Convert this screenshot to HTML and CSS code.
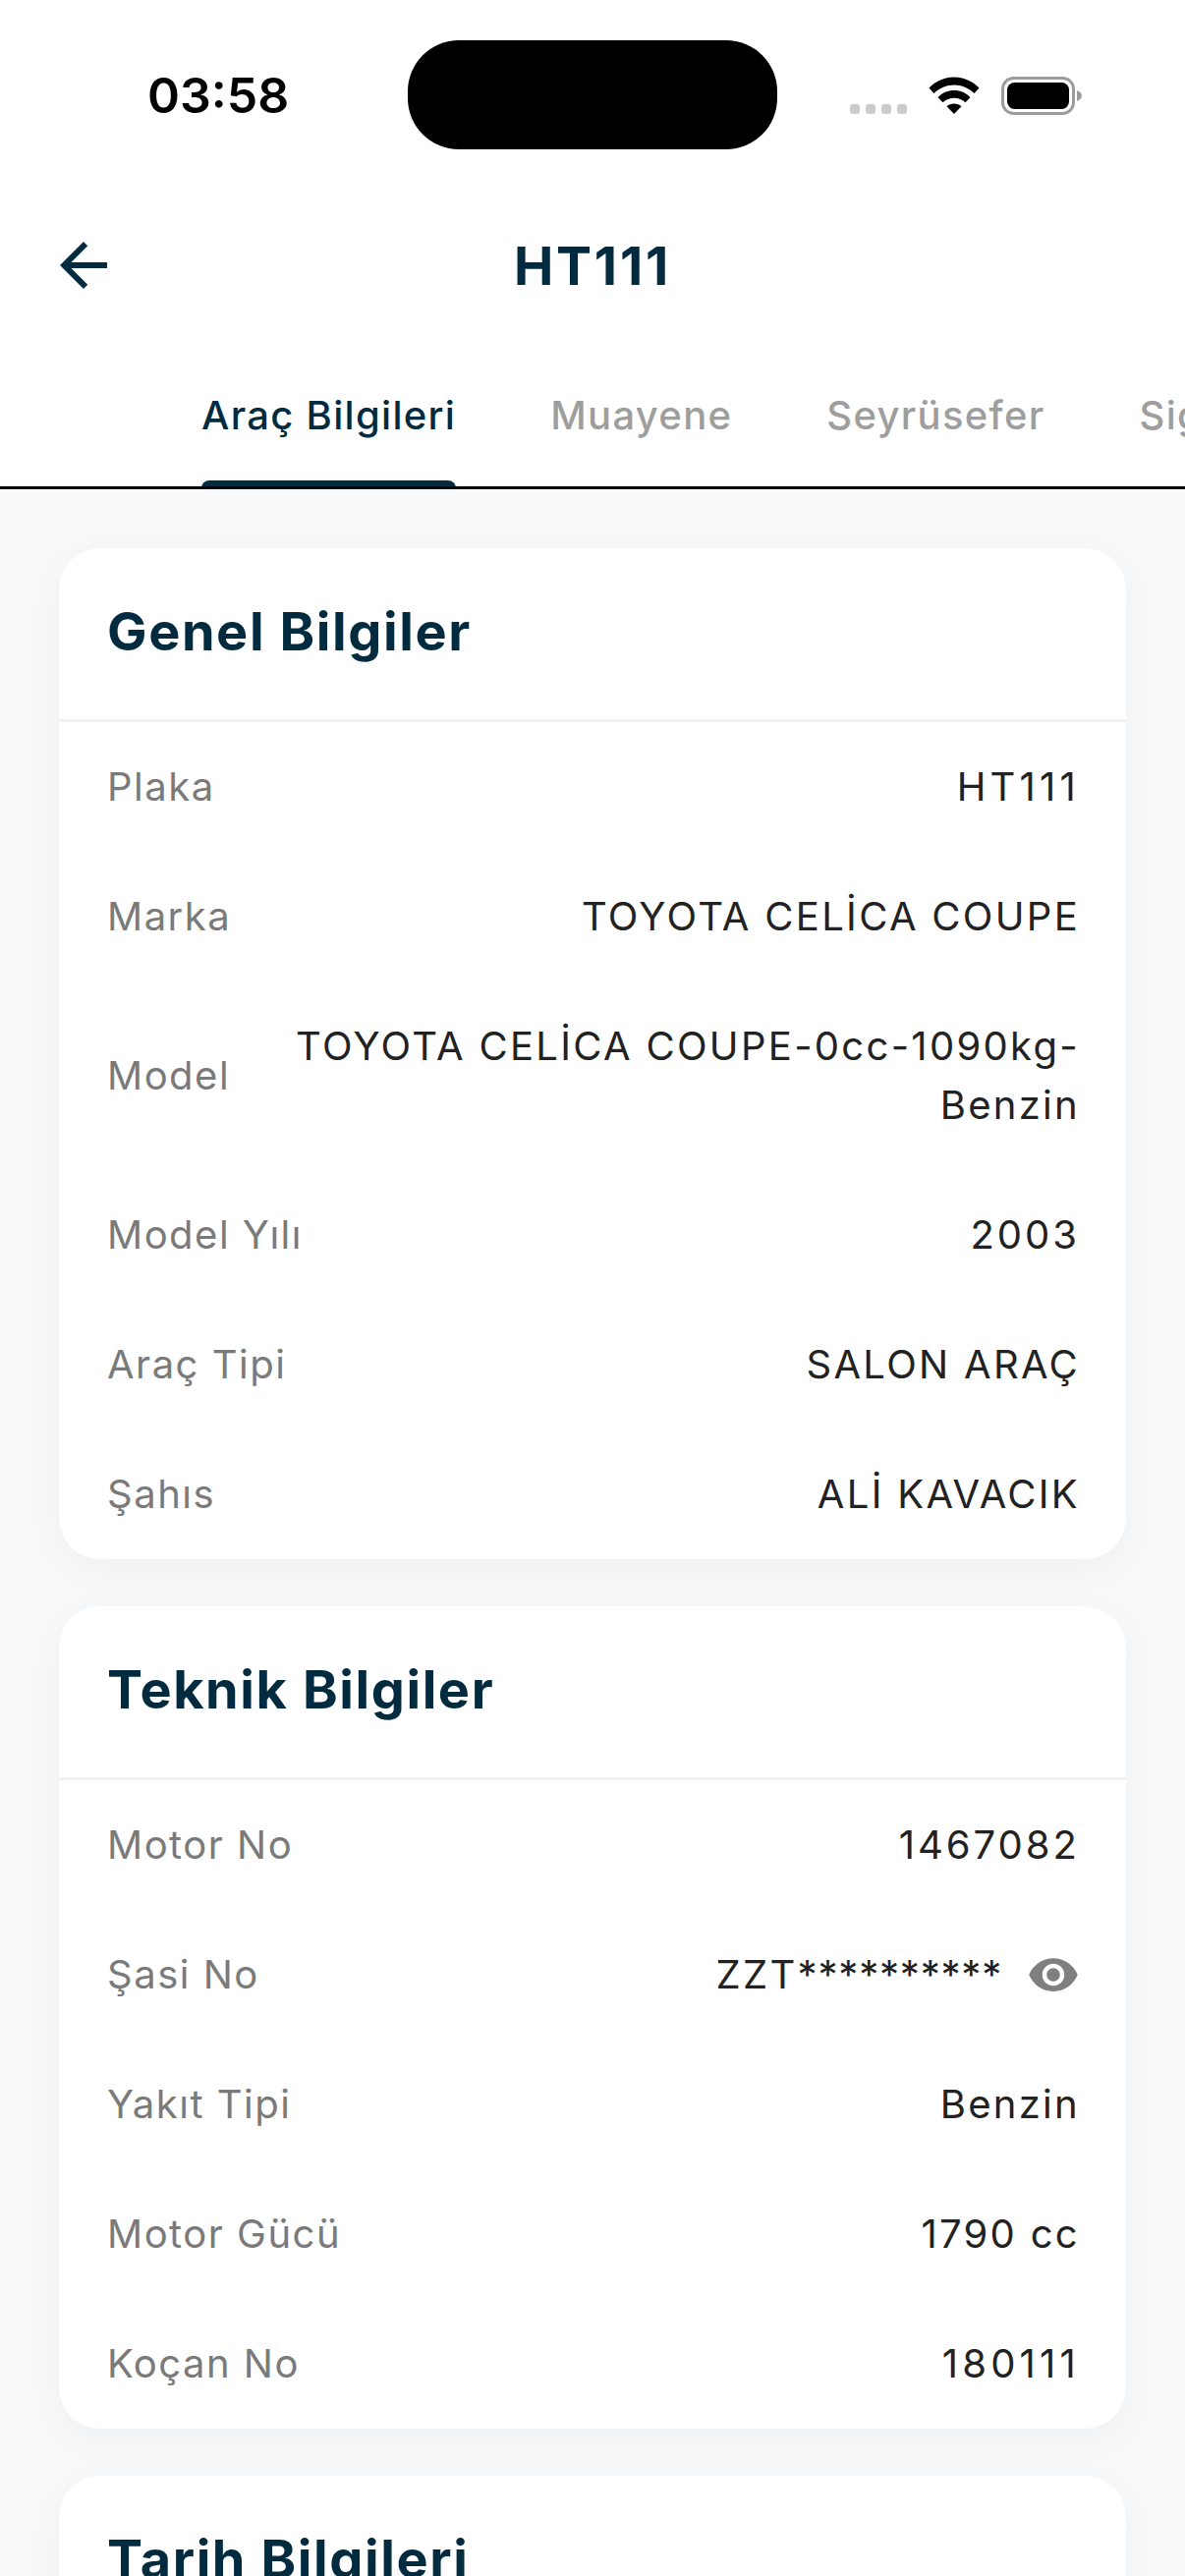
FILE: index.html
```html
<!DOCTYPE html>
<html lang="tr">
<head>
    <meta charset="UTF-8">
    <meta name="viewport" content="width=device-width, initial-scale=1.0">
    <title>HT111</title>
    <link rel="stylesheet" href="styles.css">
</head>
<body>
    <header class="top">
        <div class="status-bar">
            <span class="clock">03:58</span>
            <div class="island"></div>
            <div class="status-icons">
                <div class="signal"><i></i><i></i><i></i><i></i></div>
                <svg class="wifi" width="52" height="38" viewBox="0 0 52 38">
                    <path d="M0.5 11.5C7.5 4.5 16 0.5 26 0.5S44.5 4.5 51.5 11.5L46.5 17C40.5 11.5 34 8.5 26 8.5S11.500 11.500 5.500 17Z"/>
                    <path d="M9.500 21C14 16.500 19.500 14 26 14S38 16.500 42.500 21L37.500 26.300C34 23.300 30.500 21.800 26 21.800S18 23.300 14.500 26.300Z"/>
                    <path d="M18.500 30.300C20.500 28.500 23 27.500 26 27.500S31.500 28.500 33.500 30.300L26 38Z"/>
                </svg>
                <svg class="battery" width="82" height="39" viewBox="0 0 82 39">
                    <rect x="1.500" y="1.500" width="72" height="36" rx="11" fill="none" stroke="#9c9c9c" stroke-width="3"/>
                    <rect x="6" y="6" width="63" height="27" rx="7.500" fill="#000"/>
                    <path d="M77 14C80 15 82 17 82 19.500S80 24 77 25Z" fill="#9c9c9c"/>
                </svg>
            </div>
        </div>

        <div class="app-bar">
            <svg class="back" width="72" height="72" viewBox="0 0 24 24">
                <path d="M20 11H7.830l5.590-5.590L12 4l-8 8 8 8 1.410-1.410L7.830 13H20v-2z"/>
            </svg>
            <h1>HT111</h1>
        </div>

        <nav class="tabs">
            <a class="tab active">Araç Bilgileri</a>
            <a class="tab">Muayene</a>
            <a class="tab">Seyrüsefer</a>
            <a class="tab">Sigorta</a>
        </nav>
    </header>

    <main class="content">
        <section class="card">
            <h2>Genel Bilgiler</h2>
            <div class="row"><span class="label">Plaka</span><span class="value ones">HT111</span></div>
            <div class="row"><span class="label">Marka</span><span class="value">TOYOTA CELİCA COUPE</span></div>
            <div class="row"><span class="label">Model</span><span class="value">TOYOTA CELİCA COUPE-0cc-1090kg-Benzin</span></div>
            <div class="row"><span class="label">Model Yılı</span><span class="value digits">2003</span></div>
            <div class="row"><span class="label">Araç Tipi</span><span class="value">SALON ARAÇ</span></div>
            <div class="row"><span class="label">Şahıs</span><span class="value">ALİ KAVACIK</span></div>
        </section>

        <section class="card">
            <h2>Teknik Bilgiler</h2>
            <div class="row"><span class="label">Motor No</span><span class="value digits">1467082</span></div>
            <div class="row">
                <span class="label">Şasi No</span>
                <span class="value with-icon">
                    <span>ZZT<span class="mask">**********</span></span>
                    <svg class="eye" width="54" height="54" viewBox="0 0 24 24">
                        <path d="M12 4.500C7 4.500 2.730 7.610 1 12c1.730 4.390 6 7.500 11 7.500s9.270-3.110 11-7.500c-1.730-4.390-6-7.500-11-7.500zM12 17c-2.760 0-5-2.240-5-5s2.240-5 5-5 5 2.240 5 5-2.240 5-5 5zm0-8c-1.660 0-3 1.340-3 3s1.340 3 3 3 3-1.340 3-3-1.340-3-3-3z"/>
                    </svg>
                </span>
            </div>
            <div class="row"><span class="label">Yakıt Tipi</span><span class="value">Benzin</span></div>
            <div class="row"><span class="label">Motor Gücü</span><span class="value">1790 cc</span></div>
            <div class="row"><span class="label">Koçan No</span><span class="value ones">180111</span></div>
        </section>

        <section class="card">
            <h2>Tarih Bilgileri</h2>
        </section>
    </main>
</body>
</html>
```

FILE: styles.css
```css
* {
    box-sizing: border-box;
}

html, body {
    margin: 0;
    height: 2622px;
    overflow: hidden;
}

body {
    font-family: Inter, "Noto Sans", sans-serif;
    background-color: #f8f9fb;
    color: #222222;
}

.top {
    background: white;
    height: 498px;
    border-bottom: 3px solid #000000;
}

.status-bar {
    height: 192px;
    display: flex;
    align-items: flex-start;
    padding: 41px 0 0 150px;
}

.clock {
    width: 265px;
    margin-top: 26px;
    font-size: 50px;
    line-height: 60px;
    font-weight: 600;
    color: #000000;
}

.island {
    width: 376px;
    height: 111px;
    border-radius: 52px;
    background: #000000;
}

.status-icons {
    display: flex;
    align-items: flex-start;
    margin-left: 74px;
    margin-top: 37px;
}

.signal {
    display: flex;
    gap: 6px;
    margin-top: 28px;
    margin-right: 22px;
}

.signal i {
    width: 10px;
    height: 10px;
    border-radius: 3px;
    background: #cccccc;
}

.wifi {
    margin-right: 22px;
}

.app-bar {
    height: 156px;
    display: flex;
    align-items: center;
    justify-content: center;
    position: relative;
}

.back {
    position: absolute;
    left: 49px;
    top: 42px;
    fill: #032b40;
}

.app-bar h1 {
    margin: 0;
    font-size: 54px;
    font-weight: 700;
    letter-spacing: 2.8px;
    color: #032b40;
}

.tabs {
    display: flex;
    gap: 96px;
    height: 147px;
    padding-left: 205px;
    overflow: hidden;
}

.tab {
    flex-shrink: 0;
    position: relative;
    height: 147px;
    padding-top: 50px;
    font-size: 40px;
    line-height: 50px;
    font-weight: 450;
    letter-spacing: 1.3px;
    color: #9e9e9e;
    white-space: nowrap;
}

.tab.active {
    color: #032b40;
}

.tab.active::after {
    content: "";
    position: absolute;
    left: 0;
    right: 0;
    bottom: -3px;
    height: 9px;
    border-radius: 8px 8px 0 0;
    background: #032b40;
}

.content {
    display: flex;
    flex-direction: column;
    gap: 48px;
    padding: 60px 60px 0;
}

.card {
    background: white;
    border-radius: 42px;
    box-shadow: 0 10px 40px rgba(0, 0, 0, 0.045);
}

.card h2 {
    margin: 0;
    height: 177px;
    padding: 0 49px 5px;
    display: flex;
    align-items: center;
    border-bottom: 3px solid #eff0f2;
    font-size: 54px;
    font-weight: 700;
    letter-spacing: 1.6px;
    color: #032b40;
}

.row {
    display: flex;
    justify-content: space-between;
    align-items: center;
    gap: 40px;
    padding: 36px 49px;
    font-size: 40px;
    line-height: 60px;
    letter-spacing: 1.5px;
}

.label {
    flex-shrink: 0;
    font-weight: 370;
    color: #7a7a7a;
}

.value {
    margin-right: -2px;
    text-align: right;
    letter-spacing: 2.3px;
    color: #222222;
}

.value.digits {
    letter-spacing: 3px;
}

.value.ones {
    letter-spacing: 4.2px;
}

.with-icon {
    display: flex;
    align-items: center;
    gap: 25px;
    height: 60px;
}

.mask {
    letter-spacing: 0.8px;
}

.eye {
    fill: #7f7f7f;
}
```
